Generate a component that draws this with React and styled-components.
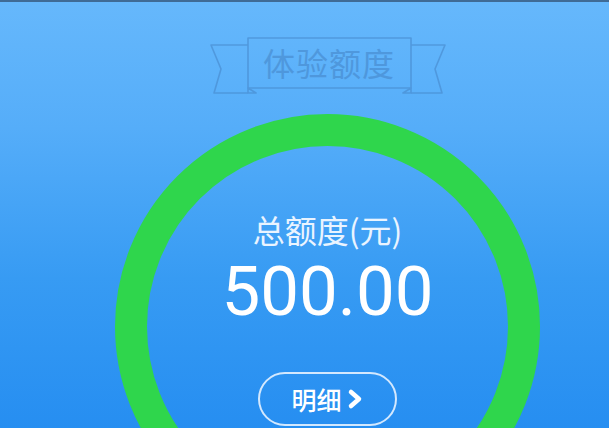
import React from "react";
import styled, { createGlobalStyle } from "styled-components";

const GlobalStyle = createGlobalStyle`
  html, body {
    margin: 0;
    padding: 0;
    background: #4ea9f8;
  }
  body {
    font-family: Roboto, "Noto Sans CJK SC", "Noto Sans", sans-serif;
  }
`;

export default function App() {
  return (
    <>
      <GlobalStyle />
      <Screen>
        <TopLine />
        <Banner>
          <RibbonArt viewBox="0 0 240 58" width="240" height="58">
            <path d="M40 8 H3 L13 32 L6 56 H40" />
            <path d="M40 51 L48 56 H40 Z" />
            <path d="M203 8 H237 L227 32 L234 56 H203" />
            <path d="M203 51 L195 56 H203 Z" />
            <rect x="40" y="1" width="163" height="50" />
          </RibbonArt>
          <BannerText>体验额度</BannerText>
        </Banner>
        <Ring>
          <Label>总额度(元)</Label>
          <Amount>500.00</Amount>
          <DetailButton>
            明细
            <Chevron viewBox="0 0 18 22" width="18" height="22">
              <path d="M5 4 L13 11 L5 18" />
            </Chevron>
          </DetailButton>
        </Ring>
      </Screen>
    </>
  );
}

const Screen = styled.div`
  width: 609px;
  height: 428px;
  overflow: hidden;
  box-sizing: border-box;
  padding-left: 46px;
  display: flex;
  flex-direction: column;
  align-items: center;
  background: linear-gradient(180deg, #66b8fc 0%, #55adf9 30%, #379bf3 65%, #268ef1 100%);
`;

const TopLine = styled.div`
  align-self: stretch;
  margin-left: -46px;
  height: 2px;
  background: #3f6b96;
  flex-shrink: 0;
`;

const Banner = styled.div`
  position: relative;
  width: 240px;
  height: 58px;
  margin-top: 35px;
  flex-shrink: 0;
  display: flex;
  justify-content: center;
  padding-left: 3px;
  box-sizing: border-box;
`;

const RibbonArt = styled.svg`
  position: absolute;
  left: 0;
  top: 0;
  fill: none;
  stroke: #4a8ed2;
  stroke-width: 1.6;
  stroke-linejoin: round;
  opacity: 0.7;
`;

const BannerText = styled.div`
  position: relative;
  font-family: "Noto Sans CJK SC", sans-serif;
  font-size: 32px;
  line-height: 50px;
  color: #4a8fd3;
  opacity: 0.75;
  letter-spacing: 1px;
`;

const Ring = styled.div`
  margin-top: 19px;
  flex-shrink: 0;
  width: 425px;
  height: 425px;
  box-sizing: border-box;
  border-radius: 50%;
  border: 32px solid #2fd64c;
  display: flex;
  flex-direction: column;
  align-items: center;
  padding-top: 63px;
`;

const Label = styled.div`
  font-family: "Noto Sans CJK SC", sans-serif;
  font-size: 32px;
  line-height: 40px;
  color: #eaf4ff;
`;

const Amount = styled.div`
  font-family: Roboto, "Noto Sans", sans-serif;
  font-size: 69px;
  line-height: 80px;
  color: #ffffff;
  margin-top: 3px;
`;

const DetailButton = styled.div`
  margin-top: 40px;
  width: 139px;
  height: 54px;
  box-sizing: border-box;
  border: 2px solid rgba(230, 242, 255, 0.9);
  border-radius: 27px;
  display: flex;
  align-items: center;
  justify-content: center;
  gap: 4px;
  font-family: "Noto Sans CJK SC", sans-serif;
  font-size: 25px;
  font-weight: 500;
  color: #ffffff;
`;

const Chevron = styled.svg`
  fill: none;
  stroke: #ffffff;
  stroke-width: 4.5;
  stroke-linecap: round;
  stroke-linejoin: round;
`;
